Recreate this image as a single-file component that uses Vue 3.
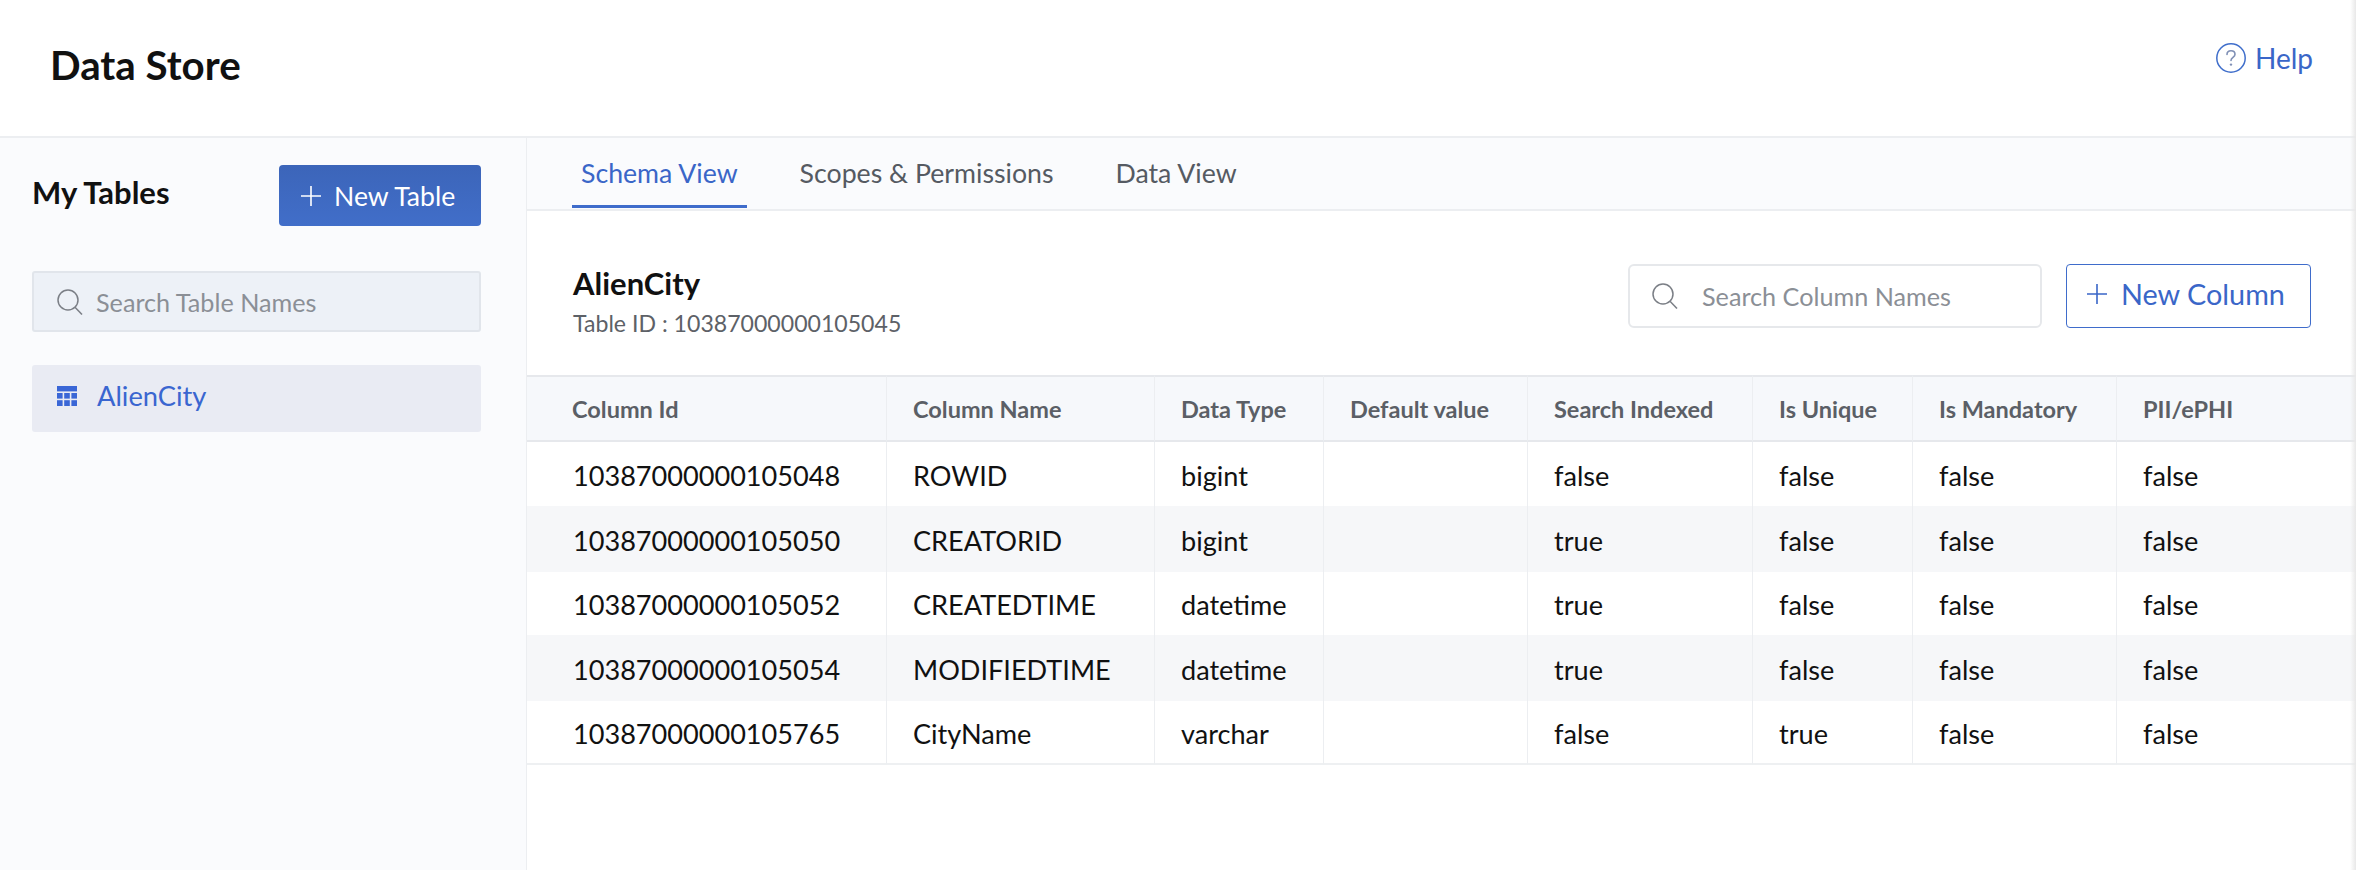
<script setup>
const tabs = ['Schema View', 'Scopes & Permissions', 'Data View']
const columns = ['Column Id', 'Column Name', 'Data Type', 'Default value', 'Search Indexed', 'Is Unique', 'Is Mandatory', 'PII/ePHI']
const rows = [
  ['10387000000105048', 'ROWID', 'bigint', '', 'false', 'false', 'false', 'false'],
  ['10387000000105050', 'CREATORID', 'bigint', '', 'true', 'false', 'false', 'false'],
  ['10387000000105052', 'CREATEDTIME', 'datetime', '', 'true', 'false', 'false', 'false'],
  ['10387000000105054', 'MODIFIEDTIME', 'datetime', '', 'true', 'false', 'false', 'false'],
  ['10387000000105765', 'CityName', 'varchar', '', 'false', 'true', 'false', 'false']
]
</script>

<template>
  <div class="page">
    <header class="top">
      <h1 class="title">Data Store</h1>
      <a class="help">
        <svg class="help-icon" viewBox="0 0 30 30" fill="none">
          <circle cx="15" cy="15" r="14.2" stroke="#3f6ecb" stroke-width="1.5" />
          <path d="M11 11.5c0-2.4 1.8-3.8 4-3.8s4 1.4 4 3.6c0 3-4 3.2-4 6.2" stroke="#7f8fb5" stroke-width="1.6" stroke-linecap="round" />
          <circle cx="15" cy="21.6" r="1.2" fill="#7f8fb5" />
        </svg>
        <span>Help</span>
      </a>
    </header>
    <div class="body">
      <aside class="side">
        <div class="side-head">
          <h2 class="side-title">My Tables</h2>
          <button class="btn-primary">
            <svg class="plus" viewBox="0 0 20 20"><path d="M10 0v20M0 10h20" stroke="currentColor" stroke-width="1.6" /></svg>
            <span>New Table</span>
          </button>
        </div>
        <div class="side-search">
          <svg class="search-icon" viewBox="0 0 26 26" fill="none">
            <circle cx="11" cy="11" r="10" stroke="#7b7f86" stroke-width="1.5" />
            <path d="M18 18.2l7 7.3" stroke="#7b7f86" stroke-width="1.5" />
          </svg>
          <span>Search Table Names</span>
        </div>
        <div class="side-item">
          <svg class="table-icon" viewBox="0 0 20 20" fill="#3a66d6">
            <rect x="0" y="0" width="20" height="5.4" />
            <rect x="0" y="7" width="5.6" height="5.6" /><rect x="7.2" y="7" width="5.6" height="5.6" /><rect x="14.4" y="7" width="5.6" height="5.6" />
            <rect x="0" y="14.2" width="5.6" height="5.8" /><rect x="7.2" y="14.2" width="5.6" height="5.8" /><rect x="14.4" y="14.2" width="5.6" height="5.8" />
          </svg>
          <span>AlienCity</span>
        </div>
      </aside>
      <main class="main">
        <nav class="tabs">
          <div v-for="(t, i) in tabs" :key="t" class="tab" :class="{ active: i === 0 }">{{ t }}</div>
        </nav>
        <section class="info">
          <div>
            <div class="name">AlienCity</div>
            <div class="tid">Table ID : 10387000000105045</div>
          </div>
          <div class="actions">
            <div class="col-search">
              <svg class="search-icon" viewBox="0 0 26 26" fill="none">
                <circle cx="11" cy="11" r="10" stroke="#7b7f86" stroke-width="1.5" />
                <path d="M18 18.2l7 7.3" stroke="#7b7f86" stroke-width="1.5" />
              </svg>
              <span>Search Column Names</span>
            </div>
            <button class="btn-outline">
              <svg class="plus" viewBox="0 0 20 20"><path d="M10 0v20M0 10h20" stroke="currentColor" stroke-width="1.6" /></svg>
              <span>New Column</span>
            </button>
          </div>
        </section>
        <div class="table">
          <div class="row head">
            <div v-for="c in columns" :key="c" class="cell">{{ c }}</div>
          </div>
          <div v-for="r in rows" :key="r[0]" class="row">
            <div v-for="(v, j) in r" :key="j" class="cell">{{ v }}</div>
          </div>
        </div>
      </main>
    </div>
    <div class="edge"></div>
  </div>
</template>

<style>
html, body { margin: 0; background: #fff; }
</style>

<style scoped>
.page {
  position: relative;
  width: 2356px;
  height: 870px;
  overflow: hidden;
  background: #fff;
  font-family: Lato, "Noto Sans", sans-serif;
  color: #111;
  display: flex;
  flex-direction: column;
}
.top {
  height: 138px;
  flex: none;
  box-sizing: border-box;
  border-bottom: 2px solid #eceef1;
  display: flex;
  justify-content: space-between;
  align-items: flex-start;
  padding: 0 43px 0 50px;
}
.title {
  margin: 41px 0 0;
  font-size: 40.3px;
  line-height: 48px;
  font-weight: 700;
  color: #111;
}
.help {
  margin-top: 41px;
  display: flex;
  align-items: center;
  gap: 9px;
  font-size: 28px;
  line-height: 34px;
  color: #3a66c8;
}
.help-icon { width: 30px; height: 30px; }
.body { flex: 1; display: flex; min-height: 0; }
.side {
  width: 527px;
  flex: none;
  box-sizing: border-box;
  background: #fafbfd;
  border-right: 1px solid #eceef1;
  padding: 27px 45px 0 32px;
}
.side-head {
  display: flex;
  justify-content: space-between;
  align-items: flex-start;
  height: 61px;
}
.side-title {
  margin: 8px 0 0;
  font-size: 31px;
  line-height: 38px;
  font-weight: 700;
  color: #111;
}
.btn-primary {
  width: 202px;
  height: 61px;
  border: 0;
  border-radius: 4px;
  background: linear-gradient(#3c65b9, #416ec9);
  color: #fff;
  font: inherit;
  font-size: 26.6px;
  display: flex;
  align-items: center;
  padding: 0 0 0 22px;
  gap: 13px;
}
.plus { width: 20px; height: 20px; flex: none; }
.side-search {
  margin-top: 45px;
  height: 61px;
  box-sizing: border-box;
  background: #edf1f7;
  border: 2px solid #e1e5eb;
  border-radius: 3px;
  display: flex;
  align-items: center;
  padding-left: 23px;
  gap: 13px;
  font-size: 25.2px;
  color: #8b8f96;
}
.search-icon { width: 26px; height: 26px; flex: none; }
.side-item {
  margin-top: 33px;
  height: 67px;
  box-sizing: border-box;
  padding: 0 0 6px 25px;
  background: #e9ebf3;
  border-radius: 3px;
  display: flex;
  align-items: center;
  gap: 20px;
  font-size: 27.3px;
  color: #3a66d0;
}
.table-icon { width: 20px; height: 20px; flex: none; }
.main { flex: 1; min-width: 0; display: flex; flex-direction: column; }
.tabs {
  height: 73px;
  flex: none;
  box-sizing: border-box;
  background: #fafbfd;
  border-bottom: 2px solid #eceef1;
  display: flex;
  padding-left: 45px;
  gap: 44px;
}
.tab {
  box-sizing: border-box;
  height: 70px;
  padding: 18px 9px 0;
  font-size: 26.7px;
  line-height: 34px;
  color: #555a62;
}
.tab.active {
  color: #3a66c8;
  border-bottom: 3px solid #3f6ccb;
}
.info {
  height: 164px;
  flex: none;
  box-sizing: border-box;
  padding: 53px 45px 0 46px;
  display: flex;
  justify-content: space-between;
  align-items: flex-start;
}
.name {
  font-size: 31px;
  line-height: 38px;
  font-weight: 700;
  color: #111;
}
.tid {
  margin-top: 6px;
  font-size: 23.1px;
  line-height: 30px;
  color: #5d6167;
}
.actions { display: flex; gap: 24px; }
.col-search {
  width: 414px;
  height: 64px;
  box-sizing: border-box;
  background: #fff;
  border: 2px solid #e6e8eb;
  border-radius: 6px;
  display: flex;
  align-items: center;
  padding-left: 22px;
  gap: 24px;
  font-size: 25.2px;
  color: #8b8f96;
}
.btn-outline {
  width: 245px;
  height: 64px;
  box-sizing: border-box;
  background: #fff;
  border: 1.5px solid #3f6ccb;
  border-radius: 4px;
  color: #3a66c8;
  font: inherit;
  font-size: 28.8px;
  display: flex;
  align-items: center;
  padding: 0 0 4px 20px;
  gap: 14px;
}
.table {
  display: grid;
  grid-template-columns: 360px 268px 169px 204px 225px 160px 204px 239px;
  grid-template-rows: 67px 64px 66px 63px 66px 64px;
}
.row { display: contents; }
.cell {
  box-sizing: border-box;
  display: flex;
  align-items: center;
  padding: 2px 0 0 26px;
  font-size: 27.1px;
  color: #111;
  border-right: 1px solid #eceef1;
}
.cell:first-child { padding-left: 46px; }
.cell:last-child { border-right: 0; }
.row:last-child .cell { border-bottom: 2px solid #eef0f2; }
.row:nth-child(odd):not(:first-child) .cell { background: #f6f7f9; }
.head .cell {
  background: #f6f8fb;
  border-top: 2px solid #e6e8ec;
  border-bottom: 2px solid #e6e8ec;
  font-size: 23.5px;
  font-weight: 700;
  color: #5b5f66;
  padding-top: 0;
}
.head .cell:first-child { padding-left: 45px; }
.edge {
  position: absolute;
  top: 0;
  right: 0;
  width: 6px;
  height: 870px;
  background: linear-gradient(90deg, rgba(235,235,235,0), #e8e8e8);
}
</style>
